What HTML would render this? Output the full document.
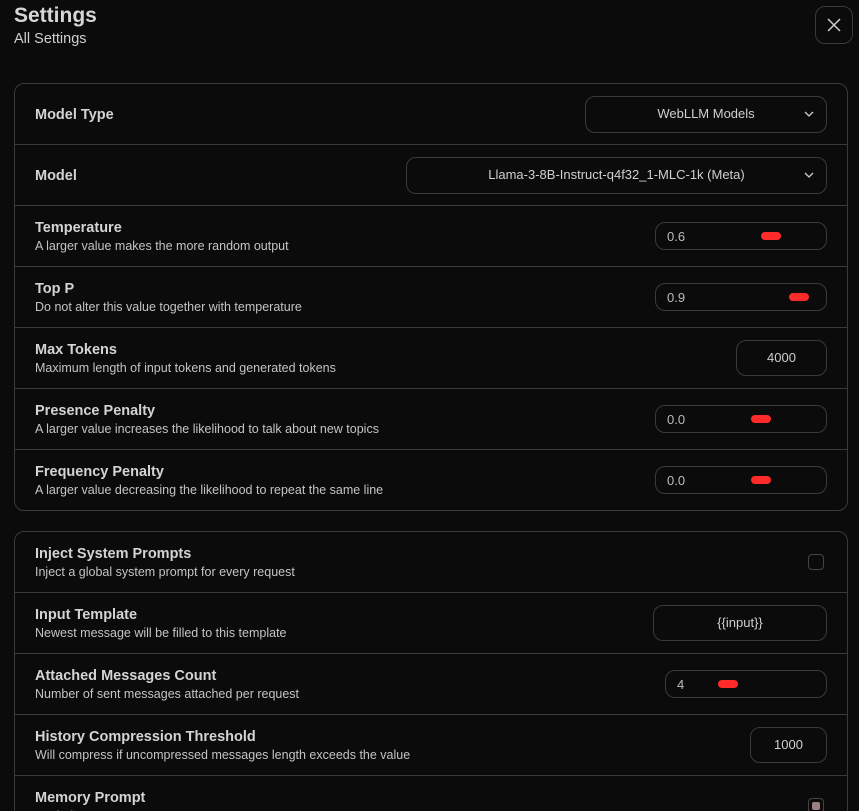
<!DOCTYPE html>
<html><head><meta charset="utf-8">
<style>
*{box-sizing:border-box;margin:0;padding:0}
html,body{width:859px;height:811px;overflow:hidden;background:#0b0b0b;color:#d8d8d8;font-family:"Liberation Sans","Noto Sans CJK SC",sans-serif}
#wrap{position:fixed;left:0;top:0;width:859px;height:811px;overflow:hidden;background:#0b0b0b}
.h1{position:absolute;left:14px;top:4px;font-size:21px;font-weight:bold;color:#d6d6d6}
.h2{position:absolute;left:14px;top:31px;font-size:14.5px;color:#cfcfcf}
.close{position:absolute;left:815px;top:6px;width:38px;height:38px;border:1px solid #3a3a3a;border-radius:10px}
.close svg{position:absolute;left:11px;top:11px}
.card{position:absolute;left:14px;width:834px;border:1px solid #3a3a3a;border-radius:10px}
.row{position:relative;height:61px;border-bottom:1px solid #3a3a3a}
.row:last-child{border-bottom:none}
.t{position:absolute;left:20px;font-size:14.5px;font-weight:bold;color:#d4d4d4}
.d{position:absolute;left:20px;top:33px;font-size:12.5px;color:#c4c4c4}
.ctl{position:absolute;border:1px solid #3a3a3a;border-radius:10px;font-size:13px;color:#d0d0d0}
.sel{text-align:center;line-height:34px}
.sel svg{position:absolute;right:12px;top:14px}
.rng{height:28px;line-height:27px;padding-left:11px;color:#bdbdbd}
.th{position:absolute;top:9px;width:20px;height:8px;border-radius:4px;background:#ff2a2a}
.cb{position:absolute;width:16px;height:16px;border:1px solid #444;border-radius:4px}
</style></head><body><div id="wrap">
<div class="h1">Settings</div>
<div class="h2">All Settings</div>
<div class="close"><svg width="14" height="14" viewBox="0 0 14 14"><path d="M1 1L13 13M13 1L1 13" stroke="#cfcfcf" stroke-width="1.5"/></svg></div>

<div class="card" style="top:83px;height:428px">
 <div class="row"><div class="t" style="top:23px">Model Type</div>
  <div class="ctl sel" style="left:570px;top:12px;width:242px;height:37px">WebLLM Models<svg width="10" height="6" viewBox="0 0 10 6"><path d="M1 1L5 5L9 1" stroke="#ccc" fill="none" stroke-width="1.3"/></svg></div></div>
 <div class="row"><div class="t" style="top:23px">Model</div>
  <div class="ctl sel" style="left:391px;top:12px;width:421px;height:37px">Llama-3-8B-Instruct-q4f32_1-MLC-1k (Meta)<svg width="10" height="6" viewBox="0 0 10 6"><path d="M1 1L5 5L9 1" stroke="#ccc" fill="none" stroke-width="1.3"/></svg></div></div>
 <div class="row"><div class="t" style="top:14px">Temperature</div><div class="d">A larger value makes the more random output</div>
  <div class="ctl rng" style="left:640px;top:16px;width:172px">0.6<div class="th" style="left:105px"></div></div></div>
 <div class="row"><div class="t" style="top:14px">Top P</div><div class="d">Do not alter this value together with temperature</div>
  <div class="ctl rng" style="left:640px;top:16px;width:172px">0.9<div class="th" style="left:133px"></div></div></div>
 <div class="row"><div class="t" style="top:14px">Max Tokens</div><div class="d">Maximum length of input tokens and generated tokens</div>
  <div class="ctl sel" style="left:721px;top:12px;width:91px;height:36px;line-height:34px">4000</div></div>
 <div class="row"><div class="t" style="top:14px">Presence Penalty</div><div class="d">A larger value increases the likelihood to talk about new topics</div>
  <div class="ctl rng" style="left:640px;top:16px;width:172px">0.0<div class="th" style="left:95px"></div></div></div>
 <div class="row"><div class="t" style="top:14px">Frequency Penalty</div><div class="d">A larger value decreasing the likelihood to repeat the same line</div>
  <div class="ctl rng" style="left:640px;top:16px;width:172px">0.0<div class="th" style="left:95px"></div></div></div>
</div>

<div class="card" style="top:531px;height:320px">
 <div class="row"><div class="t" style="top:14px">Inject System Prompts</div><div class="d">Inject a global system prompt for every request</div>
  <div class="cb" style="left:793px;top:22px"></div></div>
 <div class="row"><div class="t" style="top:14px">Input Template</div><div class="d">Newest message will be filled to this template</div>
  <div class="ctl sel" style="left:638px;top:12px;width:174px;height:36px;line-height:34px">{{input}}</div></div>
 <div class="row"><div class="t" style="top:14px">Attached Messages Count</div><div class="d">Number of sent messages attached per request</div>
  <div class="ctl rng" style="left:650px;top:16px;width:162px">4<div class="th" style="left:52px"></div></div></div>
 <div class="row"><div class="t" style="top:14px">History Compression Threshold</div><div class="d">Will compress if uncompressed messages length exceeds the value</div>
  <div class="ctl sel" style="left:735px;top:12px;width:77px;height:36px;line-height:34px">1000</div></div>
 <div class="row"><div class="t" style="top:14px">Memory Prompt</div><div class="d">Each time ...</div>
  <div class="cb" style="left:793px;top:22px"><div style="position:absolute;left:3px;top:3px;width:8px;height:8px;border-radius:2px;background:#9a8080"></div></div></div>
</div>
</div></body></html>
